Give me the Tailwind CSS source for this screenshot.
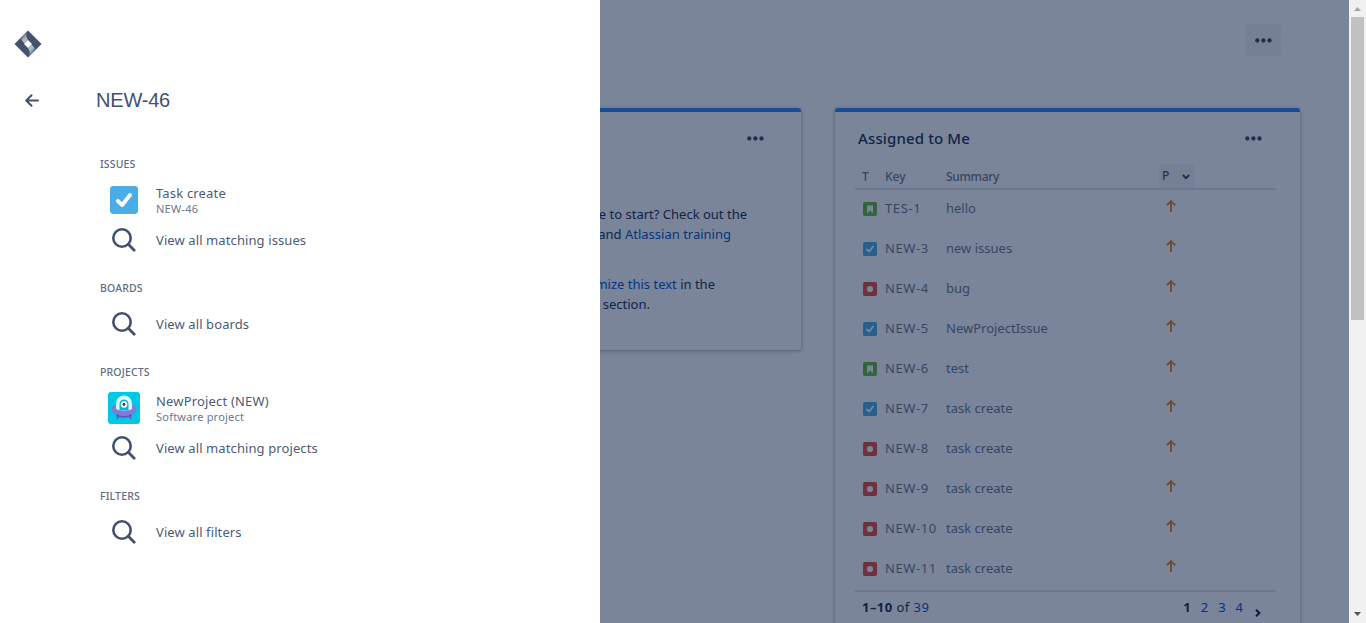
<!DOCTYPE html>
<html lang="en">
<head>
<meta charset="utf-8">
<title>Search - Jira</title>
<script src="https://cdn.jsdelivr.net/npm/@tailwindcss/browser@4"></script>
</head>
<body class="relative h-[623px] w-[1366px] overflow-hidden bg-white font-['Noto_Sans',sans-serif] text-[13px] leading-5 text-[#172b4d]">
<svg class="hidden">
  <symbol id="check" viewBox="0 0 14 14"><rect width="14" height="14" rx="1.7" fill="#4bade8"/><path d="M3.900 7.500 6.100 9.500 10 4.500" fill="none" stroke="#fff" stroke-width="1.900" stroke-linecap="round" stroke-linejoin="round"/></symbol>
  <symbol id="story" viewBox="0 0 14 14"><rect width="14" height="14" rx="1.7" fill="#63ba3c"/><path d="M4 3.4h6v7.8L7 8.4l-3 2.8z" fill="#fff"/></symbol>
  <symbol id="bug" viewBox="0 0 14 14"><rect width="14" height="14" rx="1.7" fill="#e5493a"/><circle cx="7" cy="7" r="3.1" fill="#fff"/></symbol>
  <symbol id="up" viewBox="0 0 10 12"><path d="M5 12V1.5M.8 5.4 5 1.2l4.2 4.2" fill="none" stroke="#ea7d24" stroke-width="1.9"/></symbol>
  <symbol id="dots" viewBox="0 0 17 5"><circle cx="2.3" cy="2.5" r="2.15"/><circle cx="8.4" cy="2.5" r="2.15"/><circle cx="14.5" cy="2.5" r="2.15"/></symbol>
  <symbol id="search" viewBox="0 0 24 24"><circle cx="10" cy="10" r="8.7" fill="none" stroke="#42526e" stroke-width="2.6"/><path d="M16.3 16.3 22.2 22.2" stroke="#42526e" stroke-width="2.8" stroke-linecap="round"/></symbol>
</svg>

<div class="flex h-full">
  <main class="h-full w-[1349px] overflow-hidden pl-[337px]">
    <div class="flex h-[108px] justify-end pt-6 pr-[68px]">
      <button class="flex h-8 w-9 items-center justify-center rounded-[3px] bg-[#f4f5f7]"><svg class="h-[5px] w-[17px]" fill="#344563"><use href="#dots"/></svg></button>
    </div>
    <div class="flex items-start gap-[34px]">
      <section class="h-[242px] w-[464px] rounded-[3px] border-t-4 border-[#2684ff] bg-white shadow-[0_1px_4px_rgba(9,30,66,0.4)]">
        <div class="flex h-[92px] justify-end pt-6 pr-[37px]"><svg class="h-[5px] w-[17px]" fill="#344563"><use href="#dots"/></svg></div>
        <div class="pl-6">
          <p class="w-[386px] text-right whitespace-nowrap">Not sure where to start? Check out the</p>
          <p class="w-[370px] text-right whitespace-nowrap">Jira 101 guide and <a class="text-[#0052cc]">Atlassian training</a></p>
          <p class="mt-[30px] w-[354px] text-right whitespace-nowrap">You can <a class="text-[#0052cc]">customize this text</a> in the</p>
          <p class="w-[289px] text-right whitespace-nowrap">System section.</p>
        </div>
      </section>
      <section class="h-[540px] w-[465px] rounded-[3px] border-t-4 border-[#2684ff] bg-white pr-6 pl-5 shadow-[0_1px_4px_rgba(9,30,66,0.4)]">
        <div class="flex h-[52px] justify-between pt-[15px] pr-[14px] pl-[3px]">
          <h3 class="text-[15px] leading-[22px] font-medium tracking-[0.13px]">Assigned to Me</h3>
          <svg class="mt-[9px] h-[5px] w-[17px]" fill="#344563"><use href="#dots"/></svg>
        </div>
        <div class="flex h-[26px] border-b-2 border-[#dfe1e6] pl-[7px] text-[12px] leading-[26px] font-medium text-[#6b778c]">
          <span class="w-[23px]">T</span><span class="w-[61px]">Key</span><span class="w-[213px] tracking-[-0.3px]">Summary</span>
          <span class="flex w-[35px] items-center justify-between bg-[#f4f5f7] pr-1 pl-[3px] text-[#42526e]">P<svg class="mt-px h-[6px] w-2" viewBox="0 0 8 6" fill="none" stroke="#344563" stroke-width="2"><path d="M.8 1 4 4.2 7.2 1"/></svg></span>
        </div>
        <div id="rows" class="text-[#6b778c]"></div>
        <div class="flex justify-between border-t-2 border-[#dfe1e6] pt-[5px] pl-[7px]">
          <p class="tracking-[0.45px]"><b>1–10</b> of <a class="text-[#0052cc]">39</a></p>
          <p class="flex gap-[10px] pr-[15px] text-[#0052cc]"><b class="text-[#172b4d]">1</b><a>2</a><a>3</a><a>4</a><svg class="mt-[12px] ml-[2px] h-2 w-[6px]" viewBox="0 0 6 8" fill="none" stroke="#091e42" stroke-width="2"><path d="M1 .8 4.4 4 1 7.2"/></svg></p>
        </div>
      </section>
    </div>
  </main>
  <div class="z-20 flex h-full w-[17px] flex-col items-center justify-between bg-[#f1f1f1] pt-[7px] pb-[7px]">
    <svg class="h-1 w-[7px]" viewBox="0 0 7 4" fill="#a3a3a3"><path d="M0 4 3.5 0 7 4z"/></svg>
    <div class="mt-[6px] mb-auto h-[303px] w-[13px] bg-[#c1c1c1]"></div>
    <svg class="h-1 w-[7px]" viewBox="0 0 7 4" fill="#505050"><path d="M0 0 3.5 4 7 0z"/></svg>
  </div>
</div>

<div class="absolute inset-y-0 left-0 w-[1349px] bg-[#091e42]/54"></div>

<aside class="absolute inset-y-0 left-0 flex w-[600px] bg-white text-[#42526e]">
  <nav class="w-16 shrink-0 pt-[30px] pl-[14px]">
    <svg class="h-7 w-7" viewBox="0 0 28 28">
      <defs>
        <linearGradient id="g1" x1="0" y1="0" x2=".5" y2="1"><stop offset=".2" stop-color="#42526e"/><stop offset=".75" stop-color="#b3bac5"/></linearGradient>
        <linearGradient id="g2" x1="1" y1="1" x2=".5" y2="0"><stop offset=".2" stop-color="#42526e"/><stop offset=".75" stop-color="#b3bac5"/></linearGradient>
      </defs>
      <path d="M14 .5 27.5 14 14 27.500.5 14z" fill="#42526e"/>
      <path d="M14 .5C11.500 3.500 12 7 14 10l-3.500 3.500-3.500-4C8.800 6 11 3.500 14 .5z" fill="url(#g1)"/>
      <path d="M14 27.500c2.500-3 2-6.500 0-9.500l3.500-3.500 3.500 4c-1.800 3.500-4 6-7 9z" fill="url(#g2)"/>
      <path d="M14 10 18 14 14 18 10 14z" fill="#fff"/>
    </svg>
    <svg class="mt-9 ml-[11px] h-[13px] w-[14px]" viewBox="0 0 14 13" fill="none" stroke="#42526e" stroke-width="2" stroke-linecap="round" stroke-linejoin="round"><path d="M13 6.500H1.500M6.500 1.200 1.200 6.500l5.300 5.300"/></svg>
  </nav>
  <div class="pt-[88px] pl-8">
    <div class="font-['Liberation_Sans',Arial,sans-serif] text-[20px] leading-6 tracking-[-0.2px]">NEW-46</div>
    <div id="results" class="mt-[42px] pl-1 text-[#4c5b76]"></div>
  </div>
</aside>

<script>
const rows = [['story','TES-1','hello'],['check','NEW-3','new issues'],['bug','NEW-4','bug'],['check','NEW-5','NewProjectIssue'],['story','NEW-6','test'],['check','NEW-7','task create'],['bug','NEW-8','task create'],['bug','NEW-9','task create'],['bug','NEW-10','task create'],['bug','NEW-11','task create']];
document.getElementById('rows').innerHTML = rows.map(([i,k,s]) =>
  `<div class="flex h-10 pt-2 pl-2"><svg class="mt-[4px] h-[14px] w-[14px]"><use href="#${i}"/></svg><span class="ml-2 w-[61px] tracking-[0.6px]">${k}</span><span class="w-[220px]">${s}</span><svg class="mt-[2px] h-3 w-[10px]"><use href="#up"/></svg></div>`).join('');

const ufo = `<svg class="h-8 w-8" viewBox="0 0 32 32"><rect width="32" height="32" rx="3" fill="#00c7e6"/><path d="M9.500 22v5M22.500 22v5" stroke="#6554c0" stroke-width="1.600"/><ellipse cx="16" cy="17" rx="12.400" ry="6.300" fill="#8777d9"/><path d="M8 17v-5.500a8 8 0 0 1 16 0V17c-4 2.800-12 2.800-16 0z" fill="#dff8fc"/><path d="M11.500 18.500V12a4.500 4.500 0 0 1 9 0v6.500z" fill="#00b8d9"/><path d="M4.200 15C8 20 24 20 27.800 15c2 4-3 8.500-11.800 8.500S2.200 19 4.200 15z" fill="#8777d9"/><path d="M8.500 23c4 2.600 11 2.600 15 0" fill="none" stroke="#6554c0" stroke-width="1.800"/><circle cx="16" cy="12.500" r="3.200" fill="#fff"/><circle cx="16" cy="12.500" r="1.400" fill="#253858"/></svg>`;
const task = `<svg class="h-7 w-7"><use href="#check"/></svg>`;
const groups = [['ISSUES',[task,'Task create','NEW-46'],'View all matching issues'],['BOARDS',null,'View all boards'],['PROJECTS',[ufo,'NewProject (NEW)','Software project'],'View all matching projects'],['FILTERS',null,'View all filters']];
document.getElementById('results').innerHTML = groups.map(([h,item,all]) =>
  `<section class="mb-[18px]"><h4 class="mb-[6px] h-5 text-[10.500px] leading-5 font-medium tracking-[0.15px] text-[#5e6c84]">${h}</h4>` +
  (item ? `<div class="flex h-10 items-center"><span class="ml-2 flex w-8 justify-center">${item[0]}</span><span class="ml-4 pt-px"><span class="block text-[13px] leading-4 tracking-[0.17px]">${item[1]}</span><span class="block text-[11px] leading-[15px] tracking-[0.22px] text-[#6b778c]">${item[2]}</span></span></div>` : '') +
  `<div class="flex h-10 items-center"><svg class="ml-3 h-6 w-6"><use href="#search"/></svg><span class="ml-5 tracking-[0.1px]">${all}</span></div></section>`).join('');
</script>
</body>
</html>
